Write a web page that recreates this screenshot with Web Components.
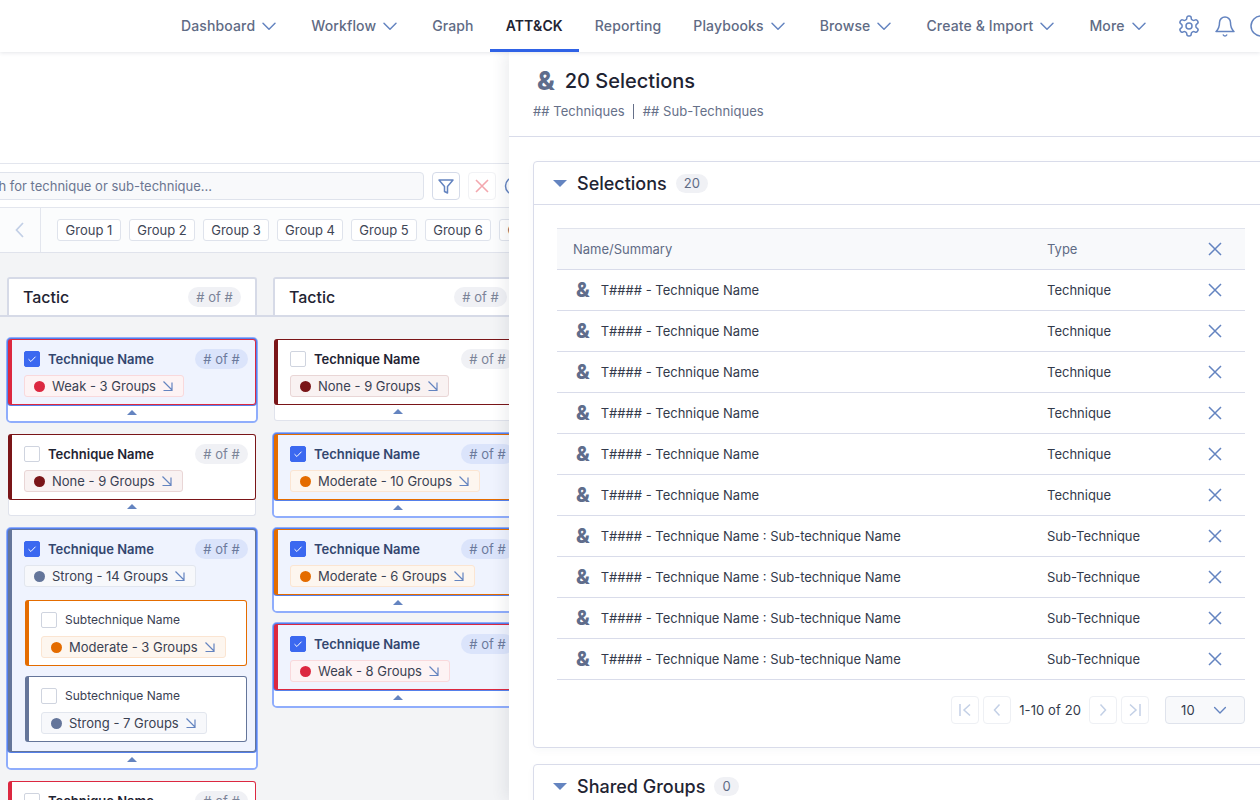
<!DOCTYPE html>
<html lang="en"><head><meta charset="utf-8"><title>ATT&amp;CK</title>
<style>
html,body{margin:0;padding:0;width:1260px;height:800px;overflow:hidden;background:#fff;font-family:Inter,"Liberation Sans",sans-serif;color:#1f2433}
</style></head><body>
<att-app></att-app>
<script>
const ICON='#6484c0';
const svg=(s,w,p,extra='')=>`<svg width="${s}" height="${s}" viewBox="0 0 ${w} ${w}" fill="none" stroke="${ICON}" stroke-width="1.5" stroke-linecap="round" stroke-linejoin="round" style="display:block;flex:none" ${extra}>${p}</svg>`;
const CHEV='<path d="M4 7.250l6 6 6-6"/>';
const def=(n,c)=>customElements.define(n,c);
class Base extends HTMLElement{
  constructor(){super();this.attachShadow({mode:'open'});}
  connectedCallback(){if(!this._r){this._r=1;this.shadowRoot.innerHTML=this.render();}}
  a(n,d=''){const v=this.getAttribute(n);return v===null?d:v;}
}
def('nav-item',class extends Base{render(){const on=this.hasAttribute('active'),m=this.hasAttribute('menu');return `<style>
:host{display:flex;align-items:center;gap:4px;padding:0 16px;height:52px;box-sizing:border-box;font:500 14px/20px Inter,sans-serif;letter-spacing:.13px;color:${on?'#1f2433':'#5f6b85'};white-space:nowrap;${on?'font-weight:600;box-shadow:inset 0 -3px 0 #2f62e6;':''}}
</style><slot></slot>${m?svg(20,20,CHEV):''}`;}});
def('app-nav',class extends Base{render(){return `<style>
:host{display:flex;align-items:center;height:52px;padding-left:165px;background:#fff;box-shadow:0 1px 4px rgba(40,50,80,.12);position:relative;z-index:3;flex:none;overflow:hidden}
.i{display:flex;gap:12px;margin-left:12px}
</style><slot></slot><div class="i">
${svg(24,24,'<path d="M12.220 2h-.44a2 2 0 0 0-2 2v.18a2 2 0 0 1-1 1.730l-.43.25a2 2 0 0 1-2 0l-.15-.08a2 2 0 0 0-2.730.73l-.22.38a2 2 0 0 0 .73 2.730l.15.1a2 2 0 0 1 1 1.720v.51a2 2 0 0 1-1 1.740l-.15.09a2 2 0 0 0-.73 2.730l.22.38a2 2 0 0 0 2.730.73l.15-.08a2 2 0 0 1 2 0l.43.25a2 2 0 0 1 1 1.730V20a2 2 0 0 0 2 2h.44a2 2 0 0 0 2-2v-.18a2 2 0 0 1 1-1.730l.43-.25a2 2 0 0 1 2 0l.15.08a2 2 0 0 0 2.730-.73l.22-.39a2 2 0 0 0-.73-2.730l-.15-.08a2 2 0 0 1-1-1.740v-.5a2 2 0 0 1 1-1.740l.15-.09a2 2 0 0 0 .73-2.730l-.22-.38a2 2 0 0 0-2.730-.73l-.15.08a2 2 0 0 1-2 0l-.43-.25a2 2 0 0 1-1-1.730V4a2 2 0 0 0-2-2z"/><circle cx="12" cy="12" r="3"/>')}
${svg(24,24,'<path d="M6.500 8.500a5.500 5.500 0 0 1 11 0c0 6 2 7.500 3.500 9H3c1.500-1.500 3.500-3 3.500-9z"/><path d="M10.300 21a1.940 1.940 0 0 0 3.400 0"/>')}
${svg(24,24,'<circle cx="12" cy="12" r="10"/>')}
</div>`;}});
def('check-box',class extends Base{render(){const c=this.hasAttribute('checked');return `<style>
:host{display:block;width:16px;height:16px;box-sizing:border-box;flex:none;border-radius:2px;border:1px solid ${c?'#3b68f0':'#cfd4df'};background:${c?'#3b68f0':'#fff'}}
svg{display:block}</style>${c?'<svg width="14" height="14" viewBox="0 0 14 14" fill="none" stroke="#fff" stroke-width="1"><path d="M3.500 7.200l2.400 2.300 4.600-4.800"/></svg>':''}`;}});
const SEV={weak:['#dc2840','#fdf3f4','#f9d9dc'],none:['#7a1518','#f9f2f2','#e9d6d6'],moderate:['#e46c00','#fdf6ef','#fbe5d2'],strong:['#64759a','#f7f8fb','#e2e6ee']};
def('sev-tag',class extends Base{render(){const s=SEV[this.a('level')];return `<style>
:host{display:inline-flex;align-self:flex-start;align-items:center;height:22px;box-sizing:border-box;padding:0 9px 0 9px;border:1px solid ${s[2]};background:${s[1]};border-radius:3px;font:400 13px/20px Inter,sans-serif;color:#3a4152;white-space:nowrap}
i{width:11px;height:11px;border-radius:50%;background:${s[0]};margin-right:7px;flex:none}
svg{margin-left:6px}
</style><i></i><slot></slot><svg width="12" height="12" viewBox="0 0 12 12" fill="none" stroke="${ICON}" stroke-width="1.200"><path d="M1.500 1.500l8.500 8.500M10 2.500V10.500H1.500"/></svg>`;}});
def('count-pill',class extends Base{render(){const on=this.hasAttribute('on');return `<style>
:host{display:inline-flex;align-items:center;justify-content:center;height:20px;width:53px;border-radius:10px;flex:none;background:${on?'#dbe4fb':'#f0f1f5'};color:${on?'#6b7a9c':'#7b8498'};font:400 13px/20px Inter,sans-serif}
</style><slot></slot>`;}});
def('sub-card',class extends Base{render(){const c=SEV[this.a('level')][0];return `<style>
:host{display:flex;flex-direction:column;height:66px;box-sizing:border-box;margin:0 1px 0 1px;background:#fff;border:1px solid ${c};border-left-width:4px;border-radius:3px;padding:11px 12px 7px 12px;gap:8px}
.r{display:flex;gap:8px;align-items:center;height:16px;font:400 12px/16px Inter,sans-serif;color:#3a4152}
</style><div class="r"><check-box></check-box>Subtechnique Name</div><sev-tag level="${this.a('level')}"><slot></slot></sev-tag>`;}});
def('tech-card',class extends Base{render(){const on=this.hasAttribute('selected'),c=SEV[this.a('level')][0];return `<style>
:host{display:block;width:252px;box-sizing:border-box;border:2px solid ${on?'#8fadfc':'transparent'};border-radius:5px;flex:none}
.m{background:${on?'#eff3fe':'#fff'};border:1px solid ${c};border-left-width:4px;border-radius:3px;padding:9px 7px 7px 12px;display:flex;flex-direction:column;gap:6px;${on?'box-shadow:0 0 0 1px #5580ea;position:relative;':''}}
.h{display:flex;align-items:center;height:20px;gap:8px;font:600 13px/20px Inter,sans-serif;color:${on?'#33466f':'#1f2433'}}
.h span{flex:1}
.s{display:flex;flex-direction:column;gap:10px;margin:7px 0 2px 0}
.s:not(.y){display:none}
.f{height:16px;box-sizing:border-box;background:#fff;display:flex;align-items:center;justify-content:center;padding-bottom:2px;${on?'':'border:1px solid #e0e3ec;border-top:0;'}border-radius:0 0 3px 3px}
.f b{width:0;height:0;border-left:5px solid transparent;border-right:5px solid transparent;border-bottom:5px solid #6484c0}
</style><div class="m"><div class="h"><check-box ${on?'checked':''}></check-box><span>Technique Name</span><count-pill ${on?'on':''}># of #</count-pill></div>
<sev-tag level="${this.a('level')}">${this.a('tag')}</sev-tag>
<div class="s ${this.children.length?'y':''}"><slot></slot></div></div><div class="f"><b></b></div>`;}});
def('tactic-col',class extends Base{render(){return `<style>
:host{display:flex;flex-direction:column;width:252px;flex:none;gap:9px}
.t{margin:0 1px 13px;height:38px;box-sizing:border-box;background:#fff;border:2px solid #d6dae7;border-bottom:0;border-radius:3px 3px 0 0;padding:0 14px;display:flex;align-items:center;justify-content:space-between;font:500 16px/20px Inter,sans-serif;color:#1f2433}
</style><div class="t">Tactic<count-pill># of #</count-pill></div><slot></slot>`;}});
def('tool-bar',class extends Base{render(){return `<style>
:host{display:flex;align-items:center;height:43px;border-top:1px solid #e3e6ee;border-bottom:1px solid #e3e6ee;background:#fff;gap:8px;flex:none}
.s{width:484px;flex:none;margin-left:-60px;height:28px;box-sizing:border-box;border:1px solid #dfe3ec;border-radius:4px;background:#f8f9fb;padding-left:22px;font:400 13px/26px Inter,sans-serif;color:#6b7691;white-space:nowrap}
.b{width:28px;height:28px;box-sizing:border-box;border:1px solid #d5dbe9;border-radius:4px;display:flex;align-items:center;justify-content:center;flex:none}
.d{border-color:#f1f2f5}
</style><div class="s"><slot></slot></div>
<div class="b">${svg(18,18,'<path d="M2 3h14l-5.500 6.500V16l-3-1.500v-5z"/>')}</div>
<div class="b d"><svg width="14" height="14" viewBox="0 0 14 14" fill="none" stroke="#f3a7ae" stroke-width="1.600" style="display:block"><path d="M1 1l12 12M13 1L1 13"/></svg></div>
${svg(20,20,'<circle cx="10" cy="10" r="8.500"/>','')}`;}});
def('group-chip',class extends Base{render(){return `<style>
:host{display:inline-block;height:22px;width:66px;box-sizing:border-box;border:1px solid #dfe3ec;border-radius:3px;background:#fff;font:400 13px/20px Inter,sans-serif;text-align:center;color:#3f4656;white-space:nowrap;flex:none}
:host(:first-child){width:64px}
</style><slot></slot>`;}});
def('group-strip',class extends Base{render(){return `<style>
:host{display:flex;align-items:center;height:45px;box-sizing:border-box;border-bottom:1px solid #e0e3ec;background:#fbfcfd;flex:none;overflow:hidden}
.a{width:41px;height:44px;box-sizing:border-box;border-right:1px solid #e3e6ee;display:flex;align-items:center;justify-content:center;flex:none}
.c{display:flex;gap:8px;padding-left:16px}
</style><div class="a"><svg width="20" height="20" viewBox="0 0 20 20" fill="none" stroke="#c2cfe6" stroke-width="1.700" style="display:block"><path d="M13 3l-6.500 7 6.500 7"/></svg></div><div class="c"><slot></slot></div>`;}});
def('amp-icon',class extends Base{render(){const s=this.a('size','19');return `<style>
:host{display:inline-flex;align-items:center;justify-content:center;flex:none;font:800 ${s}px/1 Inter,sans-serif;color:#5f6d8c}
</style>&amp;`;}});
def('num-pill',class extends Base{render(){return `<style>
:host{display:inline-flex;align-items:center;justify-content:center;height:19px;padding:0 8px;box-sizing:border-box;border-radius:10px;background:#f0f1f5;color:#5f6b85;font:400 13px/19px Inter,sans-serif}
</style><slot></slot>`;}});
def('drawer-section',class extends Base{render(){return `<style>
:host{display:block;border:1px solid #d9dcea;border-radius:4px;background:#fff;box-shadow:0 3px 8px rgba(40,50,90,.03)}
.h{display:flex;align-items:center;height:42px;padding-left:19px;border-bottom:1px solid #d9dcea;font:500 18px/24px Inter,sans-serif;color:#1f2433;box-sizing:content-box}
.h b{width:0;height:0;border-left:7px solid transparent;border-right:7px solid transparent;border-top:7px solid #6484c0;margin-right:10px}
.h span{margin-right:9px;position:relative;top:1px}
.c{padding:23px 23px 23px}
</style><div class="h"><b></b><span>${this.a('heading')}</span><num-pill>${this.a('count')}</num-pill></div><div class="c"><slot></slot></div>`;}});
const X=`<svg width="14" height="14" viewBox="0 0 14 14" fill="none" stroke="${ICON}" stroke-width="1.500" style="display:block;margin:auto"><path d="M1 1l12 12M13 1L1 13"/></svg>`;
def('table-row',class extends Base{render(){const h=this.hasAttribute('head');return `<style>
:host{display:grid;grid-template-columns:474px 1fr 30px;padding:0 15px 0 16px;align-items:center;height:${h?'42px':'41px'};box-sizing:border-box;border-bottom:1px solid #d9dcea;${h?'border-top:1px solid #e0e3ec;background:#f8f9fb;color:#5f6b85;':'color:#333a4b;'}font:400 13px/18px Inter,sans-serif}
.n{display:flex;align-items:center;gap:11px}
amp-icon{margin-left:3px}
</style><div class="n">${h?'':'<amp-icon size="20"></amp-icon>'}<slot></slot></div><div>${this.a('type')}</div>${X}`;}});
def('pager-bar',class extends Base{render(){const b=p=>`<div class="b"><svg width="18" height="18" viewBox="0 0 18 18" fill="none" stroke="#c3d0e6" stroke-width="1.500" style="display:block">${p}</svg></div>`;return `<style>
:host{display:flex;align-items:center;justify-content:flex-end;margin-top:16px;height:28px;font:400 13px/18px Inter,sans-serif;letter-spacing:.1px;color:#333a4b}
.b{width:28px;height:28px;box-sizing:border-box;border:1px solid #eef0f4;border-radius:4px;display:flex;align-items:center;justify-content:center;margin-right:4px}
.t{margin:0 8px 0 4px}
.s{width:80px;height:28px;box-sizing:border-box;margin-left:12px;border:1px solid #dfe3ec;border-radius:4px;background:#f8f9fb;display:flex;align-items:center;justify-content:space-between;padding:0 15px}
</style>${b('<path d="M4 3v12M14 3.500L8 9l6 5.500"/>')}${b('<path d="M11.500 3.500L6.500 9l5 5.500"/>')}<span class="t"><slot></slot></span>${b('<path d="M6.500 3.500l5 5.500-5 5.500"/>')}${b('<path d="M14 3v12M4 3.500L10 9l-6 5.500"/>')}<div class="s">10${svg(18,20,CHEV)}</div>`;}});
def('selection-drawer',class extends Base{render(){return `<style>
:host{position:absolute;left:509px;top:0;bottom:0;width:784px;background:#fff;box-shadow:-4px 0 14px rgba(40,50,80,.09);z-index:2;overflow:hidden}
.h{height:84px;border-bottom:1px solid #d9dcea;padding:0 24px 0 28px;box-sizing:content-box}
.t{display:flex;align-items:center;gap:10px;height:58px;font:500 20px/28px Inter,sans-serif;color:#1f2433}
.u{display:flex;align-items:center;font:400 13px/18px Inter,sans-serif;letter-spacing:.05px;color:#667089;margin:-8px 0 0 -4px}
.u i{width:1px;height:15px;background:#667089;margin:0 9px 0 8px}
.b{padding:24px 24px 0;display:flex;flex-direction:column;gap:16px}
</style><div class="h"><div class="t"><amp-icon size="26"></amp-icon>20 Selections</div><div class="u">## Techniques<i></i>## Sub-Techniques</div></div><div class="b"><slot></slot></div>`;}});
def('att-board',class extends Base{render(){return `<style>
:host{display:flex;flex-direction:column;height:100%;background:#f3f4f6;overflow:hidden}
.top{height:111px;background:#fff;flex:none}
.bar{position:relative;flex:none;padding:24px 0 0 6px;display:flex;gap:14px;align-items:flex-start}
.bar::before{content:"";position:absolute;left:0;right:0;top:62px;height:2px;background:#d6dae7}
</style><div class="top"></div><slot name="tools"></slot><slot name="groups"></slot><div class="bar"><slot></slot></div>`;}});
def('att-app',class extends Base{
 render(){
  const items=[['Dashboard',1],['Workflow',1],['Graph',0],['ATT&amp;CK',0,1],['Reporting',0],['Playbooks',1],['Browse',1],['Create &amp; Import',1],['More',1]];
  const nav=items.map(i=>`<nav-item ${i[1]?'menu':''} ${i[2]?'active':''}>${i[0]}</nav-item>`).join('');
  const chips=[1,2,3,4,5,6,7].map(n=>`<group-chip>Group ${n}</group-chip>`).join('');
  const rows=[];
  for(let i=0;i<6;i++)rows.push(`<table-row type="Technique">T#### - Technique Name</table-row>`);
  for(let i=0;i<4;i++)rows.push(`<table-row type="Sub-Technique">T#### - Technique Name : Sub-technique Name</table-row>`);
  return `<style>
:host{display:flex;flex-direction:column;width:1260px;height:800px;overflow:hidden}
main{position:relative;flex:1;min-height:0}
</style><app-nav>${nav}</app-nav>
<main>
<att-board>
<tool-bar slot="tools">Search for technique or sub-technique...</tool-bar>
<group-strip slot="groups">${chips}</group-strip>
<tactic-col>
<tech-card selected level="weak" tag="Weak - 3 Groups"></tech-card>
<tech-card level="none" tag="None - 9 Groups"></tech-card>
<tech-card selected level="strong" tag="Strong - 14 Groups"><sub-card level="moderate">Moderate - 3 Groups</sub-card><sub-card level="strong">Strong - 7 Groups</sub-card></tech-card>
<tech-card level="weak" tag="Weak - 2 Groups"></tech-card>
</tactic-col>
<tactic-col>
<tech-card level="none" tag="None - 9 Groups"></tech-card>
<tech-card selected level="moderate" tag="Moderate - 10 Groups"></tech-card>
<tech-card selected level="moderate" tag="Moderate - 6 Groups"></tech-card>
<tech-card selected level="weak" tag="Weak - 8 Groups"></tech-card>
</tactic-col>
</att-board>
<selection-drawer>
<drawer-section heading="Selections" count="20">
<table-row head type="Type">Name/Summary</table-row>
${rows.join('')}
<pager-bar>1-10 of 20</pager-bar>
</drawer-section>
<drawer-section heading="Shared Groups" count="0"></drawer-section>
</selection-drawer>
</main>`;}
});
</script>
</body></html>
